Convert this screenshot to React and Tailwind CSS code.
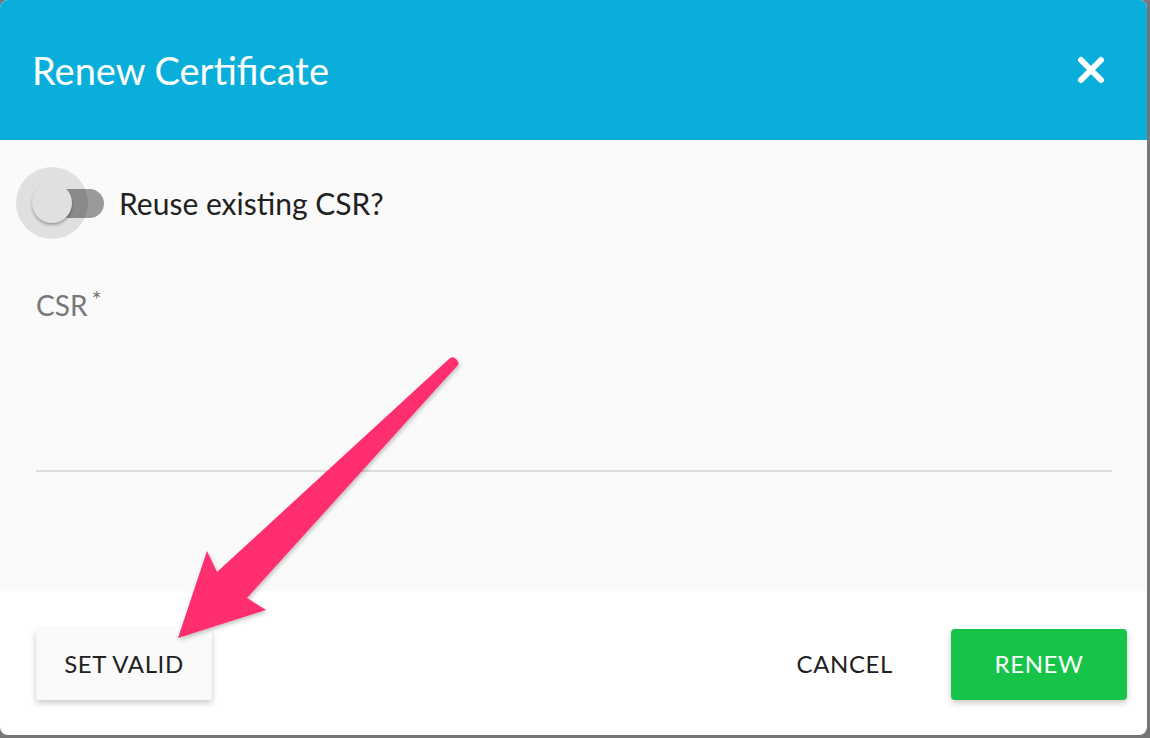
import React from 'react';

const Arrow = () => (
  <svg
    className="absolute left-0 top-0 pointer-events-none"
    width="1150"
    height="738"
    viewBox="0 0 1150 738">
    <defs>
      <filter id="sh" x="-20%" y="-20%" width="140%" height="140%">
        <feDropShadow dx="1" dy="2" stdDeviation="2" floodColor="#000" floodOpacity="0.25" />
      </filter>
    </defs>
    <path
      d="M449 359 Q453 355 457 360 Q460 364 457 366 L247 598 L266 610 L178 638 L207 551 L217 572 Z"
      fill="#ff2d6e"
      filter="url(#sh)"
    />
  </svg>
);

const App = () => {
  return (
    <div
      className="relative w-[1150px] h-[738px] bg-[#767676] overflow-hidden"
      style={{fontFamily: 'Lato, "Noto Sans", sans-serif'}}>
      <div className="w-[1147px] h-[735px] rounded-lg overflow-hidden flex flex-col bg-white">
        {/* header */}
        <div className="h-[140px] bg-[#09afda] flex items-center justify-between pl-8 pr-[42px]">
          <h1 className="text-white text-[38px] font-normal">Renew Certificate</h1>
          <svg width="28" height="28" viewBox="0 0 28 28">
            <path
              d="M4 4 L24 24 M24 4 L4 24"
              stroke="#fff"
              strokeWidth="6"
              strokeLinecap="round"
            />
          </svg>
        </div>

        {/* body */}
        <div className="h-[451px] bg-[#fafafa] flex flex-col">
          <div className="flex items-center mt-[27px] h-[72px]">
            <div className="relative w-[104px] h-[72px] ml-4 shrink-0">
              <div className="absolute left-[18px] top-[22px] w-[70px] h-[29px] rounded-full bg-[#9a9a9a]" />
              <div className="absolute left-0 top-0 w-[72px] h-[72px] rounded-full bg-black/10" />
              <div className="absolute left-4 top-4 w-10 h-10 rounded-full bg-[#e0e0e0] shadow-[0_2px_3px_rgba(0,0,0,0.3)]" />
            </div>
            <span className="text-[30px] text-[#212121] -ml-[1px]">Reuse existing CSR?</span>
          </div>
          <div className="ml-9 mt-[52px] text-[28px] text-[#777] leading-none flex">
            CSR<span className="text-[24px] ml-1 -mt-1">*</span>
          </div>
          <div className="ml-9 mr-[35px] mt-[151px] h-[2px] bg-[#dcdcdc]" />
        </div>

        {/* footer */}
        <div className="flex-1 flex items-center justify-between px-9 pt-[2px]">
          <button className="w-[176px] h-[71px] rounded bg-[#fafafa] shadow-[0_3px_6px_rgba(0,0,0,0.22)] text-[24px] text-[#212121] tracking-wide">
            SET VALID
          </button>
          <div className="flex items-center gap-[58px] -mr-4">
            <button className="text-[24px] text-[#212121] tracking-wide">CANCEL</button>
            <button className="w-[176px] h-[71px] rounded bg-[#15c448] shadow-[0_3px_6px_rgba(0,0,0,0.22)] text-[24px] text-white tracking-wide">
              RENEW
            </button>
          </div>
        </div>
      </div>
      <Arrow />
    </div>
  );
};

export default App;
